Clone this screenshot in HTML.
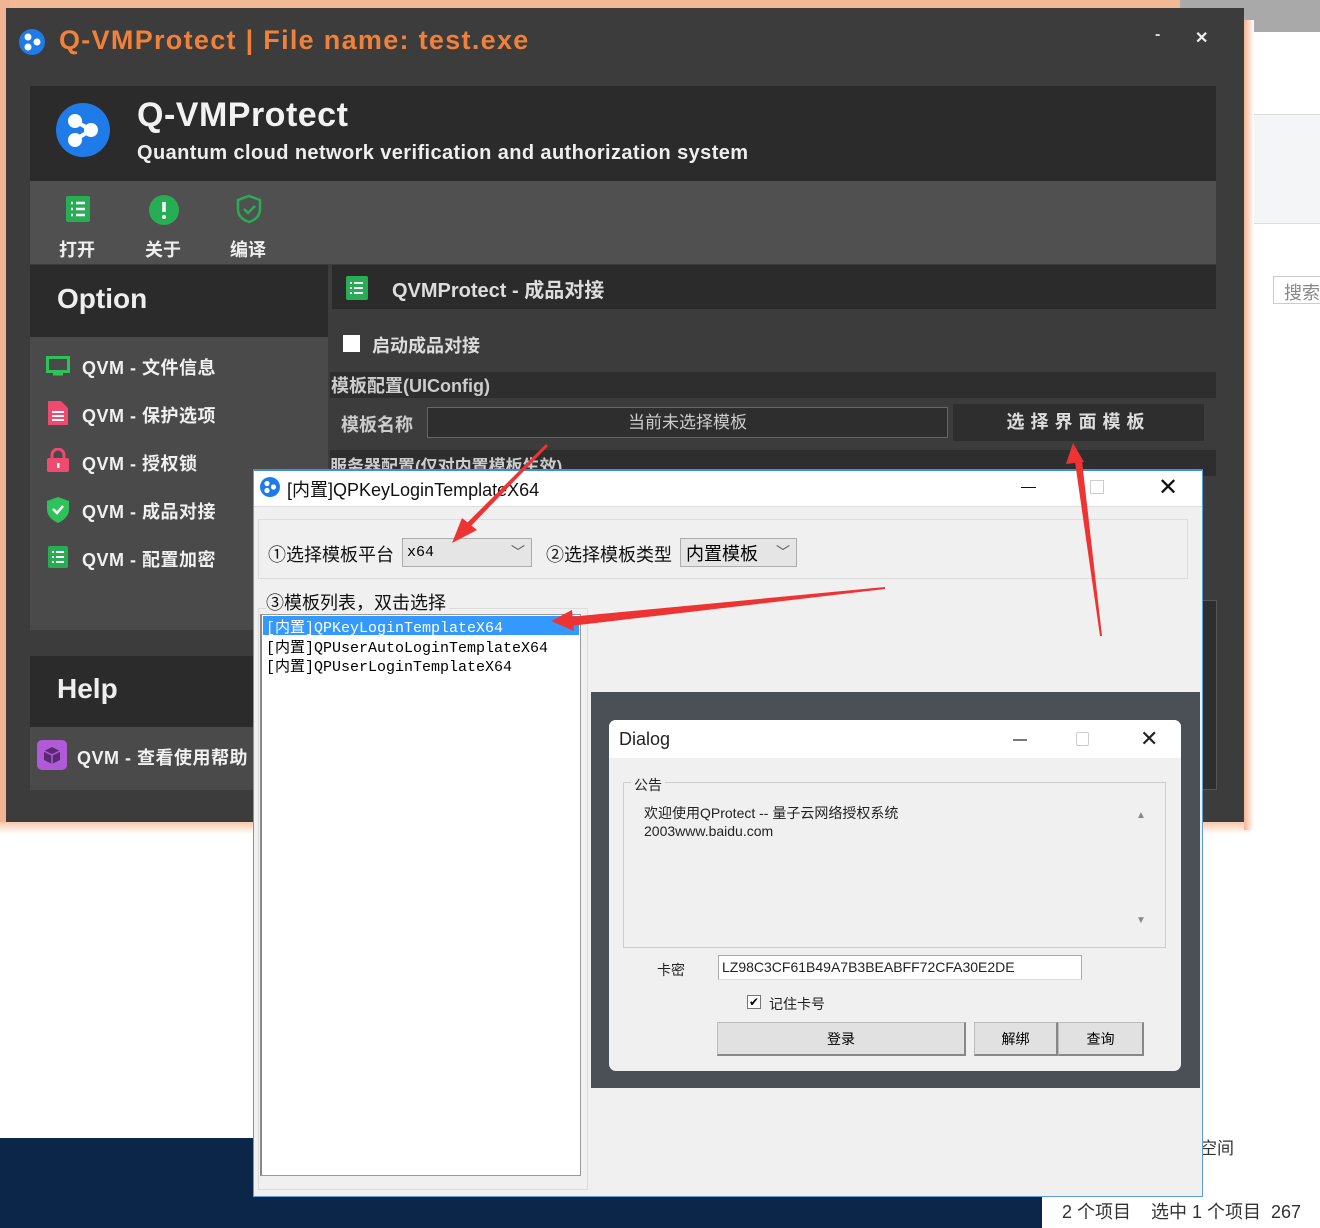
<!DOCTYPE html>
<html><head><meta charset="utf-8">
<style>
*{margin:0;padding:0;box-sizing:border-box}
body{width:1320px;height:1228px;position:relative;overflow:hidden;background:#fff;font-family:"Liberation Sans","Noto Sans CJK SC",sans-serif}
.a{position:absolute}
.w{color:#eee;font-weight:bold}
.menu{position:absolute;left:82px;font-size:18px;color:#f0f0f0;font-weight:bold;letter-spacing:0.5px}
.ms{font-family:"Liberation Mono","Noto Sans CJK SC",monospace;font-size:15px;position:absolute;left:266px;color:#000;white-space:pre}
</style></head><body>
<div class="a" style="left:0;top:0;width:1320px;height:40px;background:#f3b896"></div>
<div class="a" style="left:1180px;top:0;width:140px;height:32px;background:#a9a9a9"></div>
<div class="a" style="left:1244px;top:32px;width:76px;height:1106px;background:#fff"></div>
<div class="a" style="left:1244px;top:114px;width:76px;height:110px;background:#f4f5f7;border-top:1px solid #ddd;border-bottom:1px solid #ddd"></div>
<div class="a" style="left:1273px;top:276px;width:60px;height:28px;border:1px solid #ccc;background:#fff;color:#888;font-size:18px;padding:2px 10px">搜索</div>
<div class="a" style="left:0;top:0;width:10px;height:830px;background:#f2b594"></div>
<div class="a" style="left:0;top:822px;width:1250px;height:12px;background:linear-gradient(#f7c7aa,#fff)"></div>
<div class="a" style="left:1244px;top:20px;width:10px;height:810px;background:linear-gradient(90deg,#f5b392,#fff)"></div>
<div class="a" style="left:1200px;top:1134px;font-size:17px;color:#333">空间</div>
<div class="a" style="left:0;top:1138px;width:1042px;height:90px;background:#0b2649"></div>
<div class="a" style="left:1042px;top:1196px;width:278px;height:32px;background:#fff;font-size:18px;color:#333;padding:2px 0 0 20px;white-space:pre">2 个项目    选中 1 个项目  267</div>

<div class="a" style="left:6px;top:8px;width:1238px;height:814px;background:#3c3c3c"></div>
<svg class="a" style="left:18px;top:28px" width="28" height="28" viewBox="0 0 28 28"><circle cx="14" cy="14" r="13" fill="#1f7be8"/><circle cx="10" cy="9" r="3.5" fill="#fff"/><circle cx="19" cy="14" r="3.5" fill="#fff"/><circle cx="10" cy="19" r="3.5" fill="#fff"/></svg>
<div class="a" style="left:59px;top:25px;font-size:27px;color:#f0803a;font-weight:bold;white-space:pre;letter-spacing:1.3px">Q-VMProtect | File name: test.exe</div>
<div class="a" style="left:1155px;top:26px;color:#ddd;font-size:16px;font-weight:bold">-</div>
<div class="a" style="left:1195px;top:28px;color:#eee;font-size:16px;font-weight:bold">✕</div>

<div class="a" style="left:30px;top:86px;width:1186px;height:95px;background:#2b2b2b"></div>
<svg class="a" style="left:56px;top:103px" width="54" height="54" viewBox="0 0 54 54"><circle cx="27" cy="27" r="27" fill="#1f7be8"/><circle cx="19" cy="18" r="7" fill="#fff"/><circle cx="35" cy="27" r="7" fill="#fff"/><circle cx="19" cy="37" r="7" fill="#fff"/><path d="M19 18L35 27L19 37" stroke="#fff" stroke-width="4" fill="none"/></svg>
<div class="a w" style="left:137px;top:96px;font-size:34px;color:#f2f2f2;letter-spacing:0.5px">Q-VMProtect</div>
<div class="a w" style="left:137px;top:142px;font-size:20px;color:#eee;letter-spacing:0.4px">Quantum cloud network verification and authorization system</div>

<div class="a" style="left:30px;top:181px;width:1186px;height:83px;background:#505050"></div>
<svg class="a" style="left:66px;top:196px" width="24" height="26"><rect width="24" height="26" rx="2" fill="#27ae54"/><g stroke="#fff" stroke-width="2.5"><path d="M5 7h2M10 7h9M5 13h2M10 13h9M5 19h2M10 19h9"/></g></svg>
<svg class="a" style="left:149px;top:195px" width="30" height="30"><circle cx="15" cy="15" r="15" fill="#27ae54"/><path d="M15 7v10" stroke="#fff" stroke-width="3.5"/><circle cx="15" cy="22" r="2" fill="#fff"/></svg>
<svg class="a" style="left:236px;top:194px" width="26" height="30"><path d="M13 2L24 6v9c0 7-5 11-11 13C7 26 2 22 2 15V6z" fill="none" stroke="#27ae54" stroke-width="2.5"/><path d="M8 15l4 4 7-7" fill="none" stroke="#27ae54" stroke-width="2.5"/></svg>
<div class="a w" style="left:59px;top:236px;font-size:18px">打开</div>
<div class="a w" style="left:145px;top:236px;font-size:18px">关于</div>
<div class="a w" style="left:230px;top:236px;font-size:18px">编译</div>

<div class="a" style="left:30px;top:265px;width:298px;height:72px;background:#2b2b2b"></div>
<div class="a w" style="left:57px;top:283px;font-size:28px;color:#eee">Option</div>
<div class="a" style="left:30px;top:337px;width:298px;height:293px;background:#4a4a4a"></div>
<svg class="a" style="left:46px;top:356px" width="24" height="20"><rect x="1.5" y="1.5" width="21" height="14" fill="none" stroke="#2fc25b" stroke-width="3"/><rect x="7" y="17" width="10" height="2.5" fill="#2fc25b"/></svg>
<svg class="a" style="left:48px;top:401px" width="20" height="24"><path d="M0 0h13l7 7v17H0z" fill="#ef4a6f"/><path d="M4 11h12M4 15h12M4 19h12" stroke="#fff" stroke-width="2"/></svg>
<svg class="a" style="left:47px;top:448px" width="22" height="24"><path d="M5 11V7a6 6 0 0112 0v4" fill="none" stroke="#ef4a6f" stroke-width="3"/><rect y="10" width="22" height="14" rx="2" fill="#ef4a6f"/><rect x="10" y="15" width="2.5" height="5" fill="#fff"/></svg>
<svg class="a" style="left:47px;top:497px" width="22" height="26"><path d="M11 0L22 4v8c0 7-5 11-11 14C5 23 0 19 0 12V4z" fill="#2fc25b"/><path d="M6 12l4 4 6-7" stroke="#fff" stroke-width="2.5" fill="none"/></svg>
<svg class="a" style="left:48px;top:546px" width="20" height="22"><rect width="20" height="22" rx="2" fill="#27ae54"/><g stroke="#fff" stroke-width="2"><path d="M4 6h2M8 6h8M4 11h2M8 11h8M4 16h2M8 16h8"/></g></svg>
<div class="menu" style="top:354px">QVM - 文件信息</div>
<div class="menu" style="top:402px">QVM - 保护选项</div>
<div class="menu" style="top:450px">QVM - 授权锁</div>
<div class="menu" style="top:498px">QVM - 成品对接</div>
<div class="menu" style="top:546px">QVM - 配置加密</div>
<div class="a" style="left:30px;top:656px;width:298px;height:71px;background:#2b2b2b"></div>
<div class="a w" style="left:57px;top:673px;font-size:28px">Help</div>
<div class="a" style="left:30px;top:727px;width:298px;height:63px;background:#4a4a4a"></div>
<svg class="a" style="left:37px;top:740px" width="30" height="30"><rect width="30" height="30" rx="5" fill="#b05ad8"/><path d="M15 7l8 4v9l-8 4-8-4v-9z" fill="#5a2a70"/><path d="M7 11l8 4 8-4M15 15v9" stroke="#b05ad8" stroke-width="1.5" fill="none"/></svg>
<div class="menu" style="left:77px;top:744px">QVM - 查看使用帮助</div>

<div class="a" style="left:332px;top:265px;width:884px;height:44px;background:#2b2b2b"></div>
<svg class="a" style="left:346px;top:276px" width="22" height="24"><rect width="22" height="24" rx="2" fill="#27ae54"/><g stroke="#fff" stroke-width="2"><path d="M4 7h2M8 7h9M4 12h2M8 12h9M4 17h2M8 17h9"/></g></svg>
<div class="a w" style="left:392px;top:274px;font-size:20px;color:#ddd">QVMProtect - 成品对接</div>
<div class="a" style="left:343px;top:335px;width:17px;height:17px;background:#fff"></div>
<div class="a w" style="left:372px;top:332px;font-size:18px;color:#ddd">启动成品对接</div>
<div class="a" style="left:330px;top:372px;width:886px;height:26px;background:#2e2e2e"></div>
<div class="a" style="left:331px;top:372px;font-size:18px;color:#ccc;font-weight:bold">模板配置(UIConfig)</div>
<div class="a w" style="left:341px;top:411px;font-size:18px;color:#ccc">模板名称</div>
<div class="a" style="left:427px;top:407px;width:521px;height:31px;border:1px solid #666;background:#2e2e2e;color:#ccc;font-size:17px;text-align:center;line-height:29px">当前未选择模板</div>
<div class="a" style="left:953px;top:404px;width:251px;height:37px;background:#2e2e2e;color:#ddd;font-size:18px;font-weight:bold;text-align:center;line-height:37px;letter-spacing:6px">选择界面模板</div>
<div class="a" style="left:330px;top:450px;width:886px;height:26px;background:#2e2e2e;color:#ccc;font-size:17px;font-weight:bold;padding-top:2px">服务器配置(仅对内置模板生效)</div>
<div class="a" style="left:1190px;top:600px;width:27px;height:190px;background:#2e2e2e;border:1px solid #555"></div>

<div class="a" style="left:253px;top:469px;width:950px;height:728px;background:#f0f0f0;border:1px solid #5aa0d8;border-top:2px solid #3d8fd8"></div>
<div class="a" style="left:254px;top:471px;width:948px;height:36px;background:#fff;border-bottom:1px solid #ddd"></div>
<svg class="a" style="left:260px;top:477px" width="20" height="20"><circle cx="10" cy="10" r="10" fill="#1f7be8"/><circle cx="7" cy="6.5" r="2.6" fill="#fff"/><circle cx="13.5" cy="10" r="2.6" fill="#fff"/><circle cx="7" cy="13.5" r="2.6" fill="#fff"/></svg>
<div class="a" style="left:287px;top:476px;font-size:18px;color:#111">[内置]QPKeyLoginTemplateX64</div>
<div class="a" style="left:1021px;top:487px;width:15px;height:1px;background:#111"></div>
<div class="a" style="left:1090px;top:480px;width:14px;height:14px;border:1px solid #ccc"></div>
<div class="a" style="left:1158px;top:473px;font-size:24px;color:#111;font-weight:300">✕</div>
<div class="a" style="left:258px;top:519px;width:930px;height:60px;border:1px solid #dcdcdc"></div>
<div class="a" style="left:268px;top:541px;font-size:18px;color:#111">①选择模板平台</div>
<div class="a" style="left:402px;top:538px;width:130px;height:29px;background:#e5e5e5;border:1px solid #adadad;font-family:'Liberation Mono',monospace;font-size:15px;padding:5px 4px">x64<span style="position:absolute;right:6px;top:3px;font-size:14px;color:#555">﹀</span></div>
<div class="a" style="left:546px;top:541px;font-size:18px;color:#111">②选择模板类型</div>
<div class="a" style="left:680px;top:538px;width:117px;height:29px;background:#e5e5e5;border:1px solid #adadad;font-size:18px;padding:1px 5px">内置模板<span style="position:absolute;right:6px;top:3px;font-size:14px;color:#555">﹀</span></div>
<div class="a" style="left:258px;top:608px;width:330px;height:582px;border:1px solid #dcdcdc"></div>
<div class="a" style="left:266px;top:589px;font-size:18px;color:#111;background:#f0f0f0;padding-right:3px">③模板列表，双击选择</div>
<div class="a" style="left:260px;top:614px;width:321px;height:562px;background:#fff;border:1px solid #999;border-left:2px solid #888"></div>
<div class="a" style="left:263px;top:616px;width:316px;height:19px;background:#3399ff"></div>
<div class="ms" style="top:616px;color:#fff">[内置]QPKeyLoginTemplateX64</div>
<div class="ms" style="top:636px">[内置]QPUserAutoLoginTemplateX64</div>
<div class="ms" style="top:655px">[内置]QPUserLoginTemplateX64</div>

<div class="a" style="left:591px;top:692px;width:609px;height:396px;background:#4a5055"></div>
<div class="a" style="left:609px;top:720px;width:572px;height:351px;background:#f0f0f0;border-radius:7px;overflow:hidden">
 <div style="height:38px;background:#fff;position:relative">
  <div class="a" style="left:10px;top:9px;font-size:18px;color:#222">Dialog</div>
  <div class="a" style="left:404px;top:19px;width:14px;height:2px;background:#777"></div>
  <div class="a" style="left:467px;top:12px;width:13px;height:14px;border:1px solid #ccc;border-radius:2px"></div>
  <div class="a" style="left:531px;top:6px;font-size:22px;color:#222">✕</div>
 </div>
</div>
<div class="a" style="left:623px;top:782px;width:543px;height:166px;border:1px solid #ccc"></div>
<div class="a" style="left:631px;top:775px;font-size:14px;color:#222;background:#f0f0f0;padding:0 3px">公告</div>
<div class="a" style="left:644px;top:804px;font-size:14px;color:#222;line-height:18px">欢迎使用QProtect -- 量子云网络授权系统<br>2003www.baidu.com</div>
<div class="a" style="left:1136px;top:810px;font-size:10px;color:#888">▲</div>
<div class="a" style="left:1136px;top:915px;font-size:10px;color:#888">▼</div>
<div class="a" style="left:657px;top:960px;font-size:14px;color:#222">卡密</div>
<div class="a" style="left:718px;top:955px;width:364px;height:25px;background:#fff;border:1px solid #aaa;border-bottom-color:#ddd;font-size:14px;padding:3px 3px;color:#222">LZ98C3CF61B49A7B3BEABFF72CFA30E2DE</div>
<div class="a" style="left:747px;top:995px;width:14px;height:14px;background:#fff;border:1px solid #777;font-size:12px;line-height:12px;text-align:center">✔</div>
<div class="a" style="left:769px;top:994px;font-size:14px;color:#222">记住卡号</div>
<div class="a" style="left:717px;top:1022px;width:249px;height:34px;background:#e1e1e1;border:1px solid #bbb;border-bottom:2px solid #888;border-right:2px solid #888;text-align:center;line-height:32px;font-size:14px">登录</div>
<div class="a" style="left:974px;top:1022px;width:84px;height:34px;background:#e1e1e1;border:1px solid #bbb;border-bottom:2px solid #888;border-right:2px solid #888;text-align:center;line-height:32px;font-size:14px">解绑</div>
<div class="a" style="left:1058px;top:1022px;width:86px;height:34px;background:#e1e1e1;border:1px solid #bbb;border-bottom:2px solid #888;border-right:2px solid #888;text-align:center;line-height:32px;font-size:14px">查询</div>

<svg class="a" style="left:0;top:0" width="1320" height="1228">
 <g fill="#ee3333">
  <polygon points="546,444 548,446 470,527 466,524"/>
  <polygon points="452,543 462,518 477,530"/>
  <polygon points="885,587 885,589 570,626 569,617"/>
  <polygon points="551,621 572,610 574,631"/>
  <polygon points="1102,636 1100,636 1075,462 1082,461"/>
  <polygon points="1073,443 1066,464 1084,462"/>
 </g>
</svg>
</body></html>
